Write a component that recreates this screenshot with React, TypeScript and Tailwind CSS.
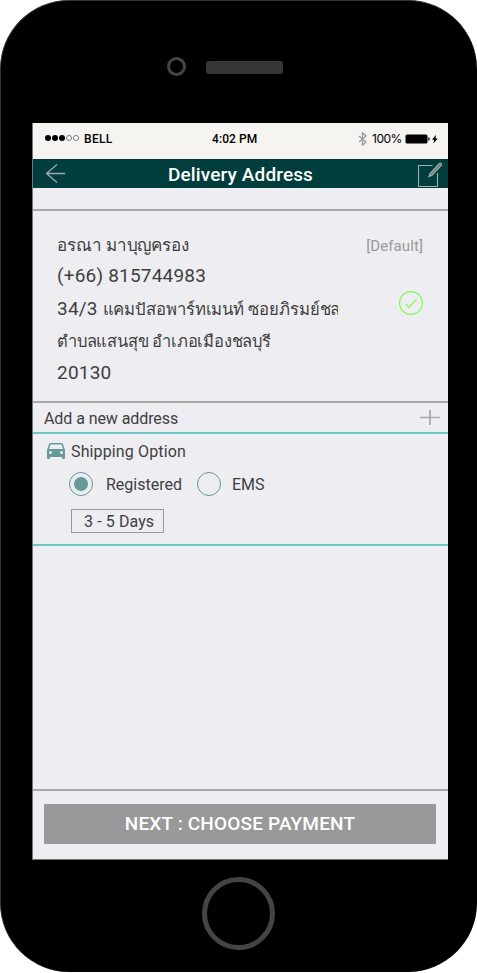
import React from "react";

function StatusBar() {
  return (
    <div className="flex h-9 shrink-0 items-start bg-[#f5f4f0] text-[12px] font-medium text-black">
      <svg className="ml-3 mt-[11px] h-[8px] w-[36px]" viewBox="0 0 36 8">
        <g fill="#000">
          <circle cx="3" cy="4" r="3" />
          <circle cx="10" cy="4" r="3" />
          <circle cx="17" cy="4" r="3" />
        </g>
        <g fill="none" stroke="#555" strokeWidth="0.7">
          <circle cx="24" cy="4" r="2.6" />
          <circle cx="31" cy="4" r="2.6" />
        </g>
      </svg>
      <span className="ml-[3px] mt-[7px] w-[128px] leading-[18px] tracking-[0.3px]">BELL</span>
      <span className="mt-[7px] w-[146px] whitespace-nowrap leading-[18px] tracking-[0.1px]">4:02 PM</span>
      <svg className="mt-[9px] h-[14px] w-[9px]" viewBox="0 0 9 14" fill="none" stroke="#999" strokeWidth="1.3">
        <path d="M1 4l7 6-3.5 3.2V.8L8 4l-7 6" />
      </svg>
      <span className="ml-[5px] mt-[7px] w-[33px] whitespace-nowrap font-[Inter] text-[12px] font-normal leading-[18px] tracking-[-0.5px]">100%</span>
      <svg className="mt-[11px] h-[10px] w-[34px]" viewBox="0 0 34 10">
        <rect x="0.5" y="0.5" width="22" height="9" rx="1.5" fill="#000" />
        <path d="M23.3 3q3 2 0 4z" fill="#000" />
        <path d="M31 0.8L27 5.700h2.200L28.300 9.400 32.800 4.400h-2.300z" fill="#000" />
      </svg>
    </div>
  );
}

function Header() {
  return (
    <div className="flex h-[29px] shrink-0 items-center bg-[#003d3d]">
      <svg className="ml-3 h-[22px] w-[22px]" viewBox="0 0 22 22" fill="none" stroke="#9fa9a9" strokeWidth="1.3">
        <path d="M20 10.500H1.500M12 1.500L1.500 10.500 12 19.500" />
      </svg>
      <h1 className="ml-[101px] mt-px w-[250px] whitespace-nowrap text-[19px] font-medium leading-[29px] tracking-[0.13px] text-white">Delivery Address</h1>
      <svg className="h-[26px] w-[26px] shrink-0" viewBox="0 0 26 26" fill="none" stroke="#a9adad" strokeWidth="1.1">
        <path d="M14.500 4.500H.5v21h19V12" />
        <path fill="#557b7b" d="M21.500 2.500L12 12.500l-1 3 3-1.300L23.300 4.300c1-1.200-.7-2.800-1.800-1.800z" />
      </svg>
    </div>
  );
}

function AddressDetails() {
  return (
    <section className="flex h-[194px] shrink-0 border-y-2 border-[#a9a9a9] pl-6 pt-[18px] text-[#3f3f3f]">
      <div className="w-[281px] overflow-hidden whitespace-nowrap text-[19px] leading-8">
        <p className="text-[17px] tracking-[-0.1px]">อรณา มาบุญครอง</p>
        <p className="mb-0.5 leading-[30px] tracking-[0.2px]">(+66) 815744983</p>
        <p><span className="tracking-[0.2px]">34/3 </span><span className="text-[16.7px] tracking-[-0.1px]">แคมปัสอพาร์ทเมนท์ ซอยภิรมย์ชล</span></p>
        <p className="text-[16.5px] tracking-[-0.2px]">ตำบลแสนสุข อำเภอเมืองชลบุรี</p>
        <p className="leading-[30px] tracking-[0.2px]">20130</p>
      </div>
      <div className="flex w-[85px] flex-col items-end">
        <span className="text-[15px] leading-[34px] tracking-[0.1px] text-[#999]">[Default]</span>
        <svg className="mt-[28px] h-[24px] w-[24px]" viewBox="0 0 24 24" fill="none" stroke="#76ff45" strokeWidth="1.2">
          <circle cx="12" cy="12" r="11.4" />
          <path d="M6.700 13.200l3.300 3L17.500 8.400" />
        </svg>
      </div>
    </section>
  );
}

function ShippingOption() {
  return (
    <section className="h-[112px] shrink-0 border-b-2 border-[#6cc8c8] text-[16px] text-[#3f3f3f]">
      <div className="flex h-[34px] items-center">
        <svg className="ml-[11px] h-6 w-6 shrink-0" viewBox="0 0 24 24" fill="#669999">
          <path d="M18.920 5.010C18.720 4.420 18.160 4 17.500 4h-11c-.66 0-1.210.42-1.420 1.010L3 11v8c0 .55.45 1 1 1h1c.55 0 1-.45 1-1v-1h12v1c0 .55.45 1 1 1h1c.55 0 1-.45 1-1v-8l-2.080-5.990zM6.500 15c-.83 0-1.500-.67-1.500-1.500S5.670 12 6.500 12s1.500.67 1.500 1.500S7.330 15 6.500 15zm11 0c-.83 0-1.500-.67-1.500-1.500s.67-1.500 1.500-1.500 1.500.67 1.500 1.500-.67 1.500-1.500 1.500zM5 10l1.500-4.500h11L19 10H5z" />
        </svg>
        <h2 className="ml-[3px] pt-0.5 tracking-[0.13px]">Shipping Option</h2>
      </div>
      <div className="flex h-[32px] items-center">
        <span className="ml-9 flex h-6 w-6 items-center justify-center rounded-full border border-[#669999]">
          <span className="h-[14px] w-[14px] rounded-full bg-[#669999]" />
        </span>
        <span className="ml-[13px] w-[91px] pt-0.5">Registered</span>
        <span className="h-6 w-6 rounded-full border border-[#669999]" />
        <span className="ml-[11px] pt-0.5">EMS</span>
      </div>
      <div className="ml-[38px] mt-[9px] h-6 w-[93px] border border-[#999] pl-[12px] leading-[23px] tracking-[0.1px]">3 - 5 Days</div>
    </section>
  );
}

export default function App() {
  return (
    <div className="h-[973px] w-[477px] overflow-hidden bg-white font-[Roboto,'Noto_Sans',sans-serif]">
      <main className="flex h-[972px] w-[477px] flex-col rounded-[69px] border-l border-t border-[#333] bg-black">
        <div className="flex h-[122px] shrink-0 items-start pl-[166px] pt-[56px]">
          <span className="h-[19px] w-[19px] rounded-full border-3 border-[#444]" />
          <span className="ml-5 mt-1 h-[13px] w-[77px] rounded-[3px] bg-[#373737]" />
        </div>
        <div className="ml-[31px] flex h-[737px] w-[416px] shrink-0 flex-col border-b border-l border-[#777] bg-[#eeedf2]">
          <StatusBar />
          <Header />
          <div className="h-[21px] shrink-0" />
          <AddressDetails />
          <div className="flex h-[31px] shrink-0 items-center border-b-2 border-[#6cc8c8] pl-[11px] text-[16px] text-[#3f3f3f]">
            <span className="w-[376px] pt-0.5 tracking-[-0.08px]">Add a new address</span>
            <svg className="h-5 w-5" viewBox="0 0 20 20" fill="none" stroke="#aaa">
              <path d="M0 9.500h20" strokeWidth="1.5" />
              <path d="M10 2v15" strokeWidth="1.8" />
            </svg>
          </div>
          <ShippingOption />
          <div className="grow" />
          <footer className="h-[70px] shrink-0 border-t-2 border-[#a9a9a9] px-[11px] pt-[13px]">
            <button className="block h-10 w-[392px] bg-[#999] pt-px text-[19px] font-medium tracking-[0.17px] text-white">NEXT : CHOOSE PAYMENT</button>
          </footer>
        </div>
        <div className="ml-[201px] mt-[17px] h-[73px] w-[73px] shrink-0 rounded-full border-5 border-[#444]" />
      </main>
    </div>
  );
}
